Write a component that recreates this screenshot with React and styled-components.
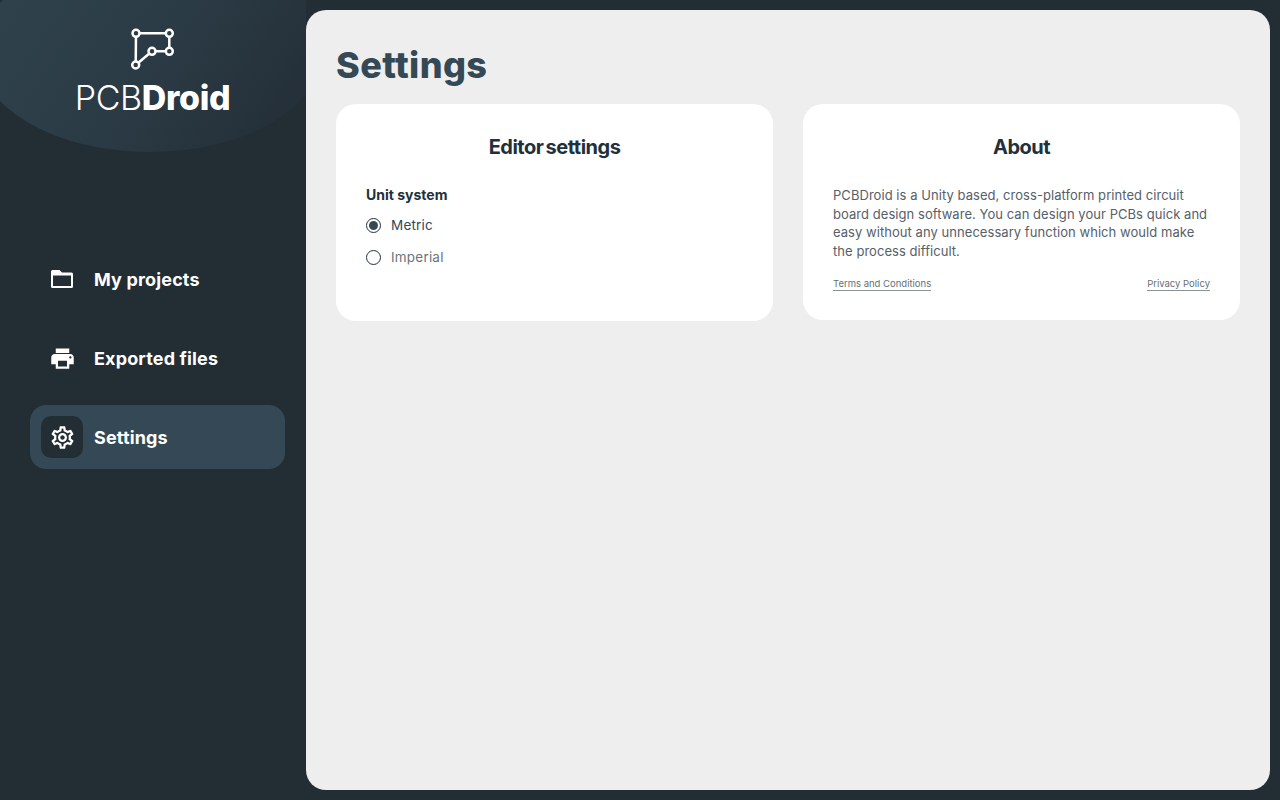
import React from 'react';
import styled, { createGlobalStyle } from 'styled-components';
import { MdOutlineSettings, MdPrint } from 'react-icons/md';

const GlobalStyle = createGlobalStyle`
  html, body {
    margin: 0;
    height: 100%;
    background: #222d34;
    font-family: "Inter", "Liberation Sans", sans-serif;
  }
  * { box-sizing: border-box; }
`;

const Page = styled.div`
  display: flex;
  width: 1280px;
  height: 800px;
  overflow: hidden;
  background: #222d34;
`;

const Sidebar = styled.aside`
  position: relative;
  width: 306px;
  flex: none;
  padding: 0 21px 0 30px;
  overflow: hidden;

  &::before {
    content: '';
    position: absolute;
    left: -22px;
    top: -48px;
    width: 344px;
    height: 200px;
    border-radius: 50% 0 50% 50%;
    background: linear-gradient(125deg, #2f424c 10%, #2b3b45 50%, #242f38 90%);
  }
`;

const Brand = styled.div`
  position: relative;
  display: flex;
  flex-direction: column;
  align-items: center;
  height: 247px;
  padding-top: 27px;
  margin-left: -10px;
`;

const BrandName = styled.div`
  margin-top: 7px;
  font-size: 34px;
  line-height: 40px;
  font-weight: 300;
  color: #fff;
  letter-spacing: -0.35px;

  b { font-weight: 800; }
`;

const Nav = styled.nav`
  position: relative;
  display: flex;
  flex-direction: column;
  gap: 15px;
`;

const NavItem = styled.a`
  display: flex;
  align-items: center;
  gap: 11px;
  height: 64px;
  padding: 0 11px;
  border-radius: 16px;
  background: ${(p) => (p.$active ? '#344955' : 'transparent')};
  color: #fff;
  font-size: 18px;
  font-weight: 700;
  letter-spacing: 0.15px;
`;

const IconBox = styled.span`
  display: flex;
  align-items: center;
  justify-content: center;
  width: 42px;
  height: 42px;
  border-radius: 10px;
  background: ${(p) => (p.$active ? '#222d34' : 'transparent')};
`;

const Main = styled.main`
  flex: none;
  width: 964px;
  height: 780px;
  margin-top: 10px;
  padding: 30px;
  border-radius: 20px;
  background: #eeeeee;
`;

const Title = styled.h1`
  margin: 0 0 14px;
  height: 50px;
  font-size: 36px;
  line-height: 50px;
  font-weight: 800;
  letter-spacing: 0.4px;
  color: #344955;
`;

const Cards = styled.div`
  display: grid;
  grid-template-columns: 437px 437px;
  gap: 30px;
  align-items: start;
`;

const Card = styled.section`
  height: ${(p) => p.$height}px;
  padding: 30px;
  border-radius: 20px;
  background: #fff;
`;

const CardTitle = styled.h2`
  margin: 0 0 24px;
  font-size: 20px;
  line-height: 26px;
  font-weight: 700;
  text-align: center;
  color: #22303a;
  letter-spacing: -0.5px;
  word-spacing: -2px;
`;

const GroupLabel = styled.div`
  margin-bottom: 9px;
  font-size: 14px;
  line-height: 22px;
  font-weight: 700;
  color: #22303a;
`;

const RadioRow = styled.label`
  display: flex;
  align-items: center;
  gap: 10px;
  height: 20px;
  margin-bottom: 12px;
  font-size: 13.5px;
  letter-spacing: 0.2px;
  color: ${(p) => (p.$on ? '#34495a' : '#6b747b')};
`;

const RadioDot = styled.span`
  display: flex;
  align-items: center;
  justify-content: center;
  width: 15px;
  height: 15px;
  border: 1px solid #22303a;
  border-radius: 50%;

  &::after {
    content: '';
    display: ${(p) => (p.$on ? 'block' : 'none')};
    width: 9px;
    height: 9px;
    border-radius: 50%;
    background: #344955;
  }
`;

const Body = styled.p`
  margin: 0 0 18px;
  padding-top: 2px;
  font-size: 13px;
  line-height: 18.5px;
  letter-spacing: 0.05px;
  color: #566069;
`;

const Links = styled.div`
  display: flex;
  justify-content: space-between;
`;

const LinkText = styled.a`
  font-size: 9.5px;
  line-height: 12px;
  color: #666f76;
  border-bottom: 1px solid #8a9299;
`;

const LogoMark = () => (
  <svg width="46" height="44" viewBox="0 0 46 44" fill="none" stroke="#fff" strokeWidth="2.5">
    <path d="M6 6.3H39.3V24.3H22L5.7 38Z" strokeLinejoin="round" />
    {[[6, 6.3], [39.3, 6.3], [39.3, 24.3], [22, 24.3], [5.7, 38]].map(([x, y]) => (
      <circle key={`${x}-${y}`} cx={x} cy={y} r="3.5" fill="#2c3d47" />
    ))}
  </svg>
);

const FolderIcon = () => (
  <svg width="24" height="20" viewBox="0 0 24 20" fill="#fff" fillRule="evenodd">
    <path d="M2.5 1H9.5L12 3.5H21.5A1.5 1.5 0 0 1 23 5V17.5A1.5 1.5 0 0 1 21.5 19H2.5A1.5 1.5 0 0 1 1 17.5V2.5A1.5 1.5 0 0 1 2.5 1ZM3 6.5V17H21V6.5Z" />
  </svg>
);

const App = () => (
  <Page>
    <GlobalStyle />
    <Sidebar>
      <Brand>
        <LogoMark />
        <BrandName>PCB<b>Droid</b></BrandName>
      </Brand>
      <Nav>
        <NavItem>
          <IconBox><FolderIcon /></IconBox>
          My projects
        </NavItem>
        <NavItem>
          <IconBox><MdPrint size={27} /></IconBox>
          Exported files
        </NavItem>
        <NavItem $active>
          <IconBox $active><MdOutlineSettings size={27} /></IconBox>
          Settings
        </NavItem>
      </Nav>
    </Sidebar>
    <Main>
      <Title>Settings</Title>
      <Cards>
        <Card $height={217}>
          <CardTitle>Editor settings</CardTitle>
          <GroupLabel>Unit system</GroupLabel>
          <RadioRow $on><RadioDot $on />Metric</RadioRow>
          <RadioRow><RadioDot />Imperial</RadioRow>
        </Card>
        <Card $height={216}>
          <CardTitle>About</CardTitle>
          <Body>
            PCBDroid is a Unity based, cross-platform printed circuit board design software. You can design
            your PCBs quick and easy without any unnecessary function which would make the process difficult.
          </Body>
          <Links>
            <LinkText>Terms and Conditions</LinkText>
            <LinkText>Privacy Policy</LinkText>
          </Links>
        </Card>
      </Cards>
    </Main>
  </Page>
);

export default App;
